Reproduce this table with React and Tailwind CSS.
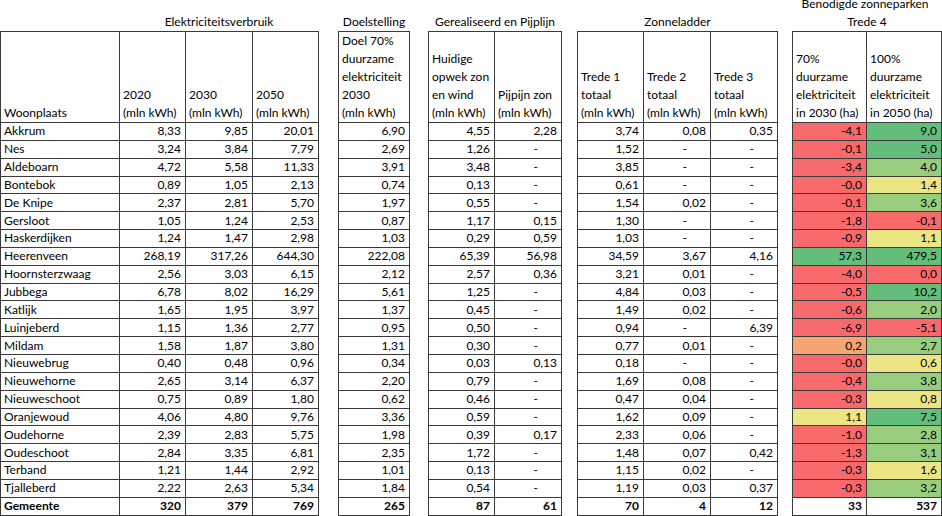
import React from "react";

// cell fill colours (Excel colour scale look)
const fills = {
  r: "bg-[#f8696b]",
  o: "bg-[#f6a470]",
  y: "bg-[#ebe583]",
  l: "bg-[#98cd7e]",
  g: "bg-[#63be7b]",
};

const rows = [
  ["Akkrum", "8,33", "9,85", "20,01", "6,90", "4,55", "2,28", "3,74", "0,08", "0,35", ["-4,1", "r"], ["9,0", "g"]],
  ["Nes", "3,24", "3,84", "7,79", "2,69", "1,26", "-", "1,52", "-", "-", ["-0,1", "r"], ["5,0", "g"]],
  ["Aldeboarn", "4,72", "5,58", "11,33", "3,91", "3,48", "-", "3,85", "-", "-", ["-3,4", "r"], ["4,0", "l"]],
  ["Bontebok", "0,89", "1,05", "2,13", "0,74", "0,13", "-", "0,61", "-", "-", ["-0,0", "r"], ["1,4", "y"]],
  ["De Knipe", "2,37", "2,81", "5,70", "1,97", "0,55", "-", "1,54", "0,02", "-", ["-0,1", "r"], ["3,6", "l"]],
  ["Gersloot", "1,05", "1,24", "2,53", "0,87", "1,17", "0,15", "1,30", "-", "-", ["-1,8", "r"], ["-0,1", "r"]],
  ["Haskerdijken", "1,24", "1,47", "2,98", "1,03", "0,29", "0,59", "1,03", "-", "-", ["-0,9", "r"], ["1,1", "y"]],
  ["Heerenveen", "268,19", "317,26", "644,30", "222,08", "65,39", "56,98", "34,59", "3,67", "4,16", ["57,3", "g"], ["479,5", "g"]],
  ["Hoornsterzwaag", "2,56", "3,03", "6,15", "2,12", "2,57", "0,36", "3,21", "0,01", "-", ["-4,0", "r"], ["0,0", "r"]],
  ["Jubbega", "6,78", "8,02", "16,29", "5,61", "1,25", "-", "4,84", "0,03", "-", ["-0,5", "r"], ["10,2", "g"]],
  ["Katlijk", "1,65", "1,95", "3,97", "1,37", "0,45", "-", "1,49", "0,02", "-", ["-0,6", "r"], ["2,0", "l"]],
  ["Luinjeberd", "1,15", "1,36", "2,77", "0,95", "0,50", "-", "0,94", "-", "6,39", ["-6,9", "r"], ["-5,1", "r"]],
  ["Mildam", "1,58", "1,87", "3,80", "1,31", "0,30", "-", "0,77", "0,01", "-", ["0,2", "o"], ["2,7", "l"]],
  ["Nieuwebrug", "0,40", "0,48", "0,96", "0,34", "0,03", "0,13", "0,18", "-", "-", ["-0,0", "r"], ["0,6", "y"]],
  ["Nieuwehorne", "2,65", "3,14", "6,37", "2,20", "0,79", "-", "1,69", "0,08", "-", ["-0,4", "r"], ["3,8", "l"]],
  ["Nieuweschoot", "0,75", "0,89", "1,80", "0,62", "0,46", "-", "0,47", "0,04", "-", ["-0,3", "r"], ["0,8", "y"]],
  ["Oranjewoud", "4,06", "4,80", "9,76", "3,36", "0,59", "-", "1,62", "0,09", "-", ["1,1", "y"], ["7,5", "g"]],
  ["Oudehorne", "2,39", "2,83", "5,75", "1,98", "0,39", "0,17", "2,33", "0,06", "-", ["-1,0", "r"], ["2,8", "l"]],
  ["Oudeschoot", "2,84", "3,35", "6,81", "2,35", "1,72", "-", "1,48", "0,07", "0,42", ["-1,3", "r"], ["3,1", "l"]],
  ["Terband", "1,21", "1,44", "2,92", "1,01", "0,13", "-", "1,15", "0,02", "-", ["-0,3", "r"], ["1,6", "y"]],
  ["Tjalleberd", "2,22", "2,63", "5,34", "1,84", "0,54", "-", "1,19", "0,03", "0,37", ["-0,3", "r"], ["3,2", "l"]],
];

const total = ["Gemeente", "320", "379", "769", "265", "87", "61", "70", "4", "12", "33", "537"];

const B = "border border-[#3a3a3a]";

const Num = ({ v, fill, bold }) => (
  <td className={`${B} p-0 pr-[4px] text-right leading-[16px] ${fill || ""} ${bold ? "font-bold" : ""}`}>
    {v === "-" ? <span className="mr-[19px]">-</span> : v}
  </td>
);

const Gap = () => <td className="p-0 leading-[16px]" />;

const Head = ({ lines }) => (
  <td className={`${B} p-0 pl-[3px] align-bottom text-left`}>
    {lines.map((l, i) => (
      <div key={i}>{l}</div>
    ))}
  </td>
);

export default function App() {
  const renderRow = (r, bold) => {
    const [name, a, b, c, d, e, f, g, h, i, j, k] = r;
    const jv = Array.isArray(j) ? j : [j, null];
    const kv = Array.isArray(k) ? k : [k, null];
    return (
      <tr key={name} className="h-[17.85px]">
        <td className={`${B} p-0 pl-[3px] leading-[16px] ${bold ? "font-bold" : ""}`}>{name}</td>
        <Num v={a} bold={bold} />
        <Num v={b} bold={bold} />
        <Num v={c} bold={bold} />
        <Gap />
        <Num v={d} bold={bold} />
        <Gap />
        <Num v={e} bold={bold} />
        <Num v={f} bold={bold} />
        <Gap />
        <Num v={g} bold={bold} />
        <Num v={h} bold={bold} />
        <Num v={i} bold={bold} />
        <Gap />
        <Num v={jv[0]} fill={jv[1] && fills[jv[1]]} bold={bold} />
        <Num v={kv[0]} fill={kv[1] && fills[kv[1]]} bold={bold} />
      </tr>
    );
  };

  return (
    <div className="w-[942px] h-[516px] overflow-hidden bg-white text-black">
      <table
        className="-mt-[5px] table-fixed border-collapse text-[12px] leading-[18px] w-[941px]"
        style={{ fontFamily: "Lato, 'Liberation Sans', sans-serif" }}
      >
        <colgroup>
          <col className="w-[119px]" />
          <col className="w-[66px]" />
          <col className="w-[67px]" />
          <col className="w-[66px]" />
          <col className="w-[20px]" />
          <col className="w-[71px]" />
          <col className="w-[19px]" />
          <col className="w-[66px]" />
          <col className="w-[67px]" />
          <col className="w-[16px]" />
          <col className="w-[66px]" />
          <col className="w-[67px]" />
          <col className="w-[67px]" />
          <col className="w-[15px]" />
          <col className="w-[74px]" />
          <col className="w-[75px]" />
        </colgroup>
        <tbody>
          <tr className="h-[18px]">
            <td colSpan={14} className="p-0" />
            <td colSpan={2} className="p-0 pr-[4px] text-center whitespace-nowrap">
              Benodigde zonneparken
            </td>
          </tr>
          <tr className="h-[18px]">
            <td className="p-0" />
            <td colSpan={3} className="p-0 text-center">Elektriciteitsverbruik</td>
            <td className="p-0" />
            <td className="p-0 text-center">Doelstelling</td>
            <td className="p-0" />
            <td colSpan={2} className="p-0 text-center whitespace-nowrap">Gerealiseerd en Pijplijn</td>
            <td className="p-0" />
            <td colSpan={3} className="p-0 text-center">Zonneladder</td>
            <td className="p-0" />
            <td colSpan={2} className="p-0 text-center">Trede 4</td>
          </tr>
          <tr className="h-[90px]">
            <Head lines={["Woonplaats"]} />
            <Head lines={["2020", "(mln kWh)"]} />
            <Head lines={["2030", "(mln kWh)"]} />
            <Head lines={["2050", "(mln kWh)"]} />
            <Gap />
            <Head lines={["Doel 70%", "duurzame", "elektriciteit", "2030", "(mln kWh)"]} />
            <Gap />
            <Head lines={["Huidige", "opwek zon", "en wind", "(mln kWh)"]} />
            <Head lines={["Pijpijn zon", "(mln kWh)"]} />
            <Gap />
            <Head lines={["Trede 1", "totaal", "(mln kWh)"]} />
            <Head lines={["Trede 2", "totaal", "(mln kWh)"]} />
            <Head lines={["Trede 3", "totaal", "(mln kWh)"]} />
            <Gap />
            <Head lines={["70%", "duurzame", "elektriciteit", "in 2030 (ha)"]} />
            <Head lines={["100%", "duurzame", "elektriciteit", "in 2050 (ha)"]} />
          </tr>
          {rows.map((r) => renderRow(r, false))}
          {renderRow(total, true)}
        </tbody>
      </table>
    </div>
  );
}
